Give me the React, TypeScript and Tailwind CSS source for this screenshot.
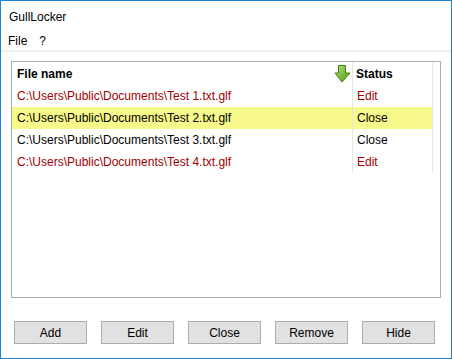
const files = [
  { path: "C:\\Users\\Public\\Documents\\Test 1.txt.glf", status: "Edit" },
  { path: "C:\\Users\\Public\\Documents\\Test 2.txt.glf", status: "Close" },
  { path: "C:\\Users\\Public\\Documents\\Test 3.txt.glf", status: "Close" },
  { path: "C:\\Users\\Public\\Documents\\Test 4.txt.glf", status: "Edit" },
];

const selected = 1;

function SortArrow() {
  return (
    <svg width="17" height="18" viewBox="0 0 17 18">
      <defs>
        <linearGradient id="arrowFill" x1="0" y1="0" x2="1" y2="1">
          <stop offset="0" stopColor="#b6e36e" />
          <stop offset="1" stopColor="#4a9a18" />
        </linearGradient>
      </defs>
      <path
        d="M4.5 0.5 H11.5 V8 H16 L8 17 L1 8 H4.5 Z"
        fill="url(#arrowFill)"
        stroke="#3f7f17"
        strokeWidth="1"
        strokeLinejoin="round"
      />
    </svg>
  );
}

export default function App() {
  const buttons = ["Add", "Edit", "Close", "Remove", "Hide"];

  return (
    <div className="w-[452px] h-[359px] border border-[#1883d7] bg-white flex flex-col font-['Liberation_Sans',Arial,sans-serif] text-[12px] text-black">
      <div className="h-[29px] pl-[8px] flex items-center pt-[2px]">GullLocker</div>
      <div className="h-[20px] pl-[7px] flex items-center gap-[12px] pt-[1px]">
        <span>File</span>
        <span>?</span>
      </div>
      <div className="h-[2px] bg-[#f0f0f0]" />

      <div className="mx-[10px] mt-[9px] h-[237px] border border-[#adadad] bg-white">
        <div className="flex h-[23px]">
          <div className="w-[341px] border-r border-[#e5e5e5] flex items-center justify-between pl-[5px] pr-[1px]">
            <span className="font-bold">File name</span>
            <SortArrow />
          </div>
          <div className="w-[80px] border-r border-[#e5e5e5] flex items-center pl-[3px]">
            <span className="font-bold">Status</span>
          </div>
        </div>
        {files.map((f, i) => (
          <div
            key={f.path}
            className={`flex h-[22px] w-[421px] ${i === selected ? "bg-[#f7f98a]" : ""} ${
              f.status === "Edit" ? "text-[#a00000]" : "text-black"
            }`}
          >
            <div className="w-[341px] border-r border-[#e5e5e5] flex items-center pl-[5px]">{f.path}</div>
            <div className="w-[80px] border-r border-[#e5e5e5] flex items-center pl-[4px]">{f.status}</div>
          </div>
        ))}
      </div>

      <div className="flex gap-[14px] pl-[13px] mt-[23px]">
        {buttons.map((b) => (
          <button
            key={b}
            className="w-[73px] h-[23px] bg-[#e1e1e1] border border-[#adadad] flex items-center justify-center"
          >
            {b}
          </button>
        ))}
      </div>
    </div>
  );
}
